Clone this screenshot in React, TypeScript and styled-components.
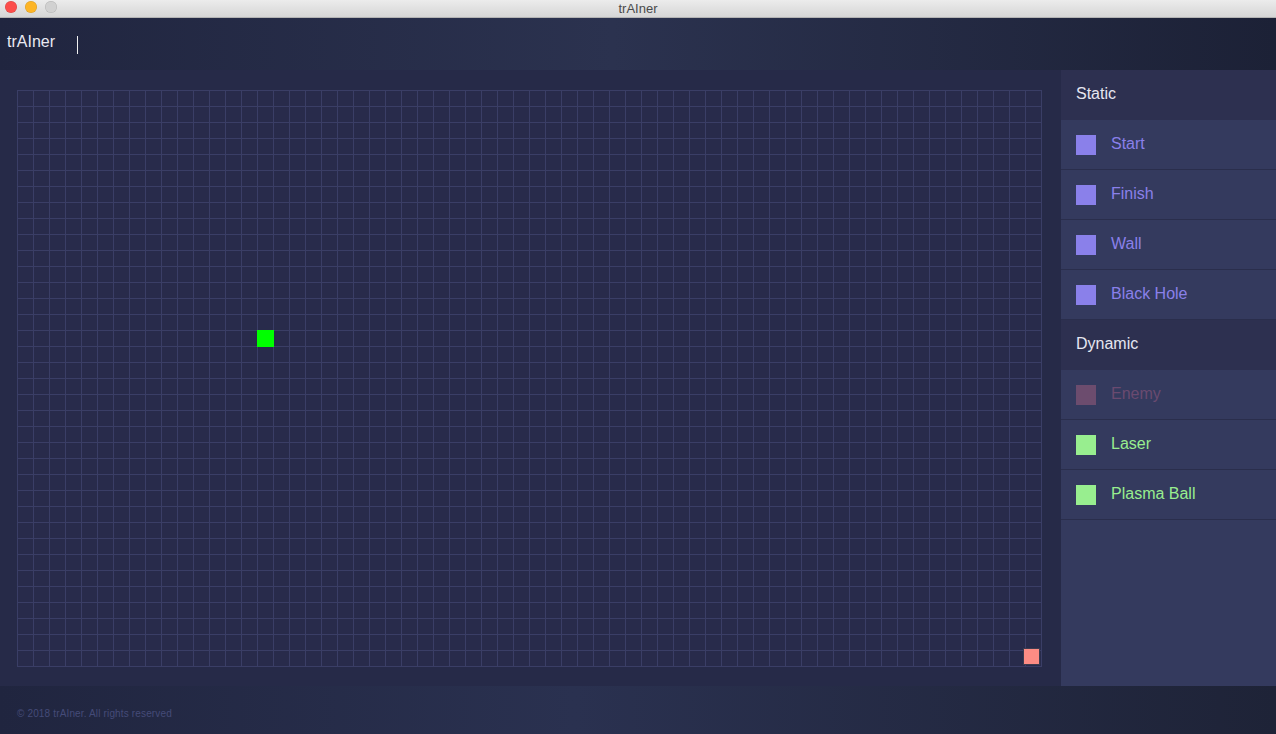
import styled, { createGlobalStyle } from "styled-components";

const GlobalStyle = createGlobalStyle`
  html, body {
    margin: 0;
    padding: 0;
    background: #262a48;
    font-family: "Liberation Sans", Arial, sans-serif;
  }
  * { box-sizing: border-box; }
`;

const CELL = 16;
const COLS = 64;
const ROWS = 36;

interface Tool {
  name: string;
  color: string;
  swatch: string;
}

const staticTools: Tool[] = [
  { name: "Start", color: "#8a80ea", swatch: "#8a80ea" },
  { name: "Finish", color: "#8a80ea", swatch: "#8a80ea" },
  { name: "Wall", color: "#8a80ea", swatch: "#8a80ea" },
  { name: "Black Hole", color: "#8a80ea", swatch: "#8a80ea" },
];

const dynamicTools: Tool[] = [
  { name: "Enemy", color: "#6a4a70", swatch: "#6c4c6e" },
  { name: "Laser", color: "#98ee8f", swatch: "#98ee8f" },
  { name: "Plasma Ball", color: "#98ee8f", swatch: "#98ee8f" },
];

const placed = [
  { col: 15, row: 15, color: "#00ff00", outlined: false },
  { col: 63, row: 35, color: "#fd8c84", outlined: true },
];

export default function App() {
  return (
    <Window>
      <GlobalStyle />
      <TitleBar>
        <Lights>
          <Light color="#fc4e4b" />
          <Light color="#fdb526" />
          <Light color="#d1d1d1" />
        </Lights>
        <WindowTitle>trAIner</WindowTitle>
      </TitleBar>
      <Header>
        <Brand>trAIner</Brand>
        <Caret />
      </Header>
      <Main>
        <Stage>
          <Board>
            {placed.map((p, i) => (
              <Piece
                key={i}
                color={p.color}
                outlined={p.outlined}
                style={{
                  left: p.col * CELL - (p.outlined ? 2 : 0),
                  top: p.row * CELL - (p.outlined ? 2 : 0),
                }}
              />
            ))}
          </Board>
        </Stage>
        <Sidebar>
          <SectionTitle>Static</SectionTitle>
          {staticTools.map(t => (
            <ToolRow key={t.name}>
              <Swatch color={t.swatch} />
              <ToolName color={t.color}>{t.name}</ToolName>
            </ToolRow>
          ))}
          <SectionTitle>Dynamic</SectionTitle>
          {dynamicTools.map(t => (
            <ToolRow key={t.name}>
              <Swatch color={t.swatch} />
              <ToolName color={t.color}>{t.name}</ToolName>
            </ToolRow>
          ))}
        </Sidebar>
      </Main>
      <Footer>© 2018 trAIner. All rights reserved</Footer>
    </Window>
  );
}

const Window = styled.div`
  width: 1276px;
  height: 734px;
  display: flex;
  flex-direction: column;
  overflow: hidden;
`;

const TitleBar = styled.div`
  position: relative;
  height: 18px;
  flex-shrink: 0;
  display: flex;
  align-items: center;
  justify-content: center;
  background: linear-gradient(to bottom, #ececec, #d6d6d6);
  border-bottom: 1px solid #b4b4b4;
`;

const Lights = styled.div`
  position: absolute;
  left: 5px;
  top: 1px;
  display: flex;
  gap: 8px;
`;

const Light = styled.span<{ color: string }>`
  width: 12px;
  height: 12px;
  border-radius: 50%;
  background: ${p => p.color};
  box-shadow: inset 0 0 0 0.5px rgba(0, 0, 0, 0.15);
`;

const WindowTitle = styled.span`
  font-size: 13px;
  color: #4a4a4a;
  line-height: 17px;
`;

const Header = styled.header`
  height: 52px;
  flex-shrink: 0;
  display: flex;
  align-items: center;
  padding-left: 7px;
  background: linear-gradient(to right, #20253f 0%, #2b324f 48%, #1c2136 100%);
`;

const Brand = styled.span`
  font-size: 16px;
  color: #e9e9f2;
  margin-top: -4px;
`;

const Caret = styled.span`
  width: 1px;
  height: 18px;
  margin-left: 22px;
  margin-top: 2px;
  background: #f0f0f0;
`;

const Main = styled.main`
  height: 616px;
  flex-shrink: 0;
  display: flex;
`;

const Stage = styled.section`
  width: 1061px;
  background: #262a48;
  padding: 20px 0 0 17px;
`;

const Board = styled.div`
  position: relative;
  width: ${COLS * CELL + 1}px;
  height: ${ROWS * CELL + 1}px;
  background-color: #282b4b;
  background-image:
    linear-gradient(to right, #3a3e66 1px, transparent 1px),
    linear-gradient(to bottom, #3a3e66 1px, transparent 1px);
  background-size: ${CELL}px ${CELL}px;
  border-right: 1px solid #3a3e66;
  border-bottom: 1px solid #3a3e66;
  background-clip: padding-box;
`;

const Piece = styled.div<{ color: string; outlined: boolean }>`
  position: absolute;
  width: 17px;
  height: 17px;
  background: ${p => p.color};
  border: ${p => (p.outlined ? "1px solid #3c3c50" : "none")};
`;

const Sidebar = styled.aside`
  flex: 1;
  background: #343a5e;
  display: flex;
  flex-direction: column;
`;

const SectionTitle = styled.div`
  height: 50px;
  display: flex;
  align-items: center;
  padding-left: 15px;
  padding-bottom: 2px;
  background: #2d3050;
  color: #e6e6f0;
  font-size: 16px;
`;

const ToolRow = styled.div`
  height: 50px;
  display: flex;
  align-items: center;
  padding-left: 15px;
  gap: 15px;
  border-bottom: 1px solid #2a2e4c;
`;

const Swatch = styled.span<{ color: string }>`
  width: 20px;
  height: 20px;
  margin-top: 1px;
  background: ${p => p.color};
`;

const ToolName = styled.span<{ color: string }>`
  color: ${p => p.color};
  font-size: 16px;
  margin-top: -1px;
`;

const Footer = styled.footer`
  flex: 1;
  display: flex;
  align-items: center;
  padding-left: 17px;
  padding-top: 6px;
  font-size: 10px;
  letter-spacing: 0.15px;
  color: #454b78;
  background: linear-gradient(to right, #20253f 0%, #2a3150 45%, #1e2337 100%);
`;
